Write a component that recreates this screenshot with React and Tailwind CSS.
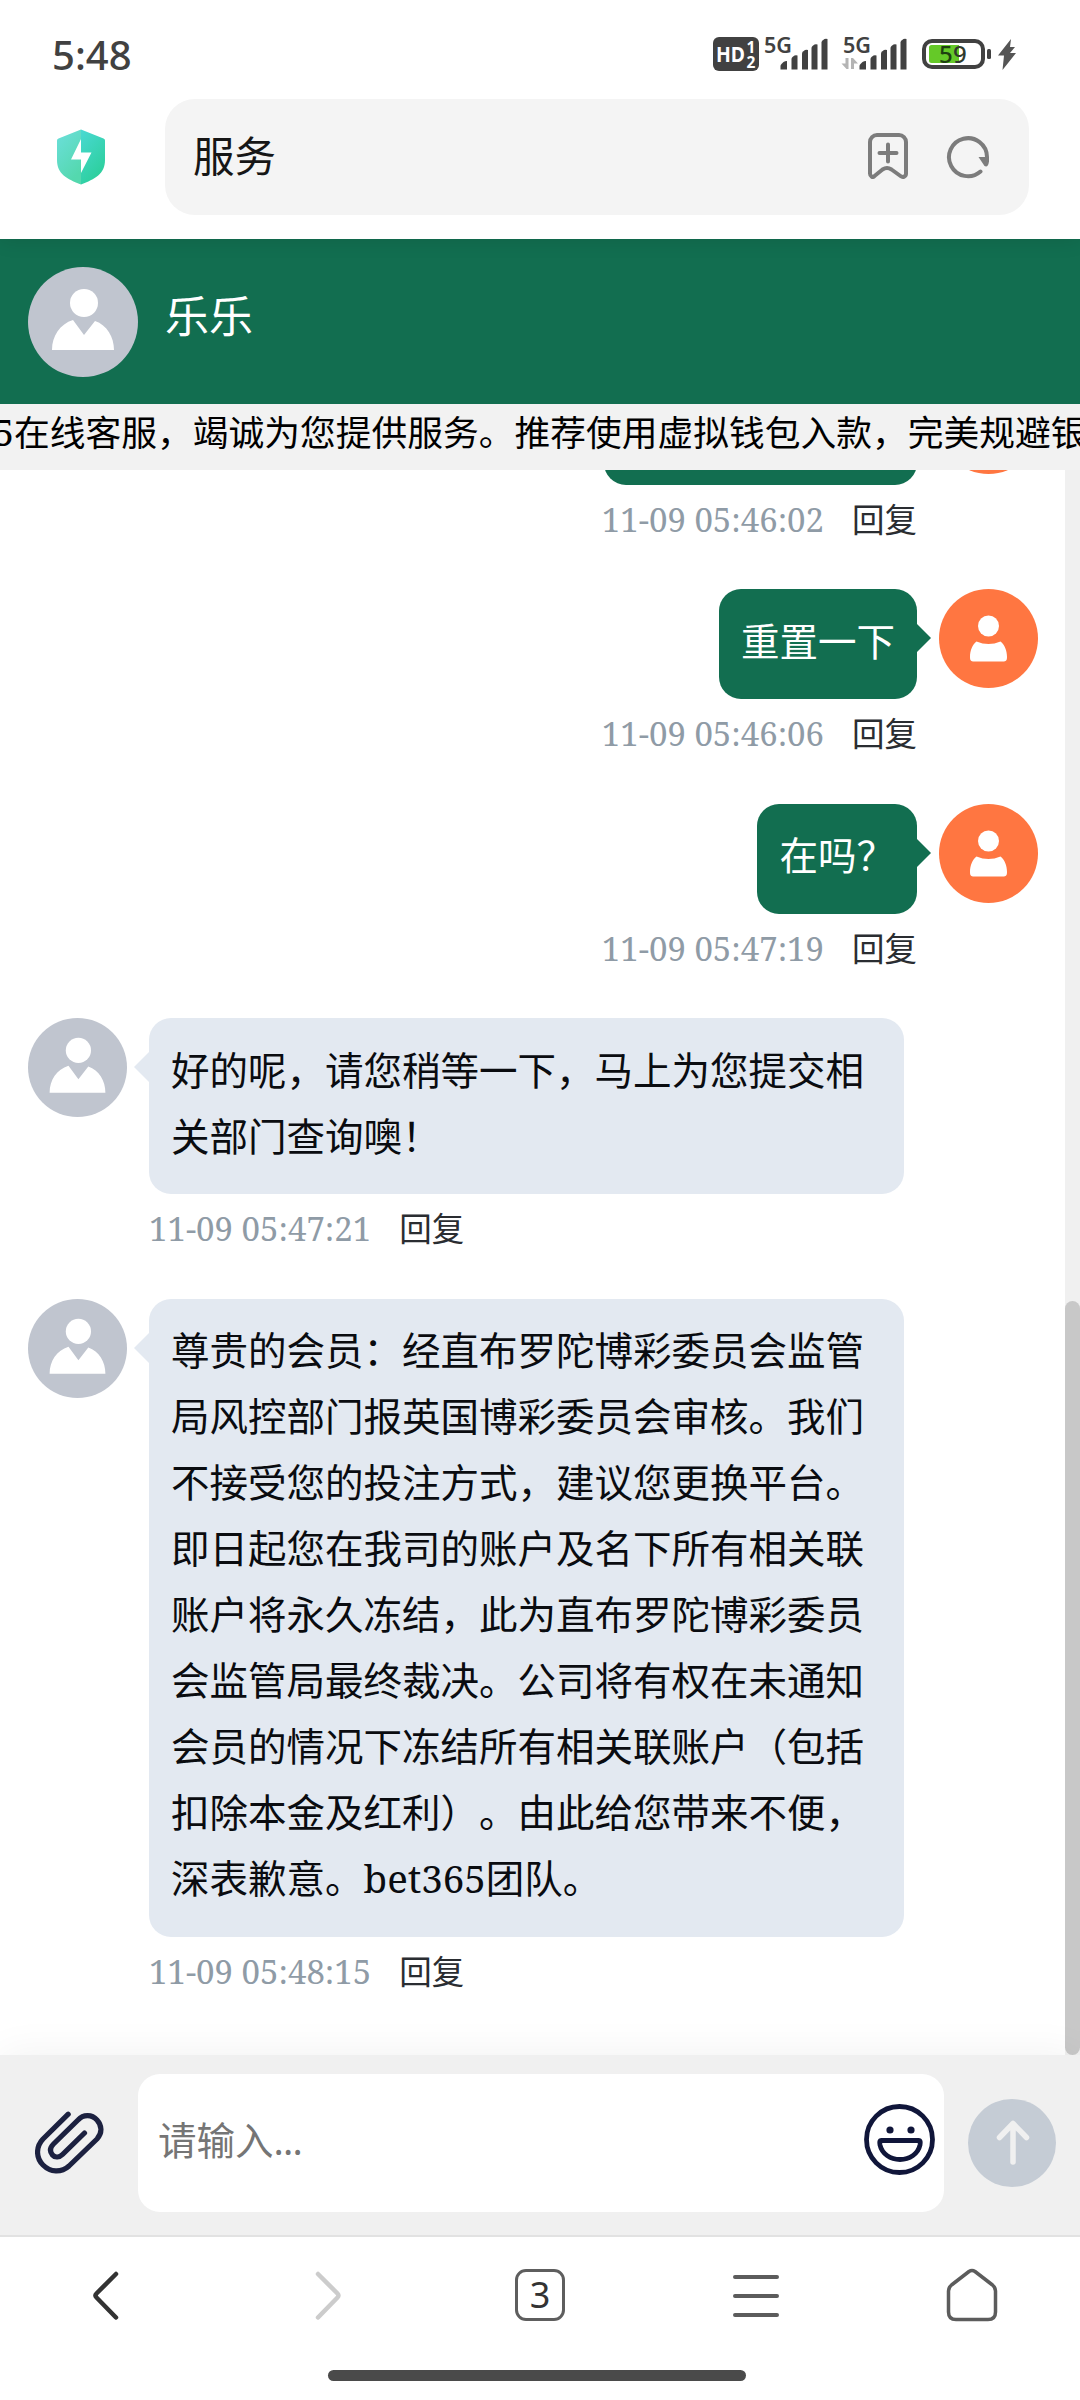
import React from 'react'

const messages = [
    { id: 1, mine: true, text: '', time: '11-09 05:46:02' },
    { id: 2, mine: true, text: '重置一下', time: '11-09 05:46:06' },
    { id: 3, mine: true, text: '在吗？', time: '11-09 05:47:19' },
    { id: 4, mine: false, text: '好的呢，请您稍等一下，马上为您提交相关部门查询噢！', time: '11-09 05:47:21' },
    {
        id: 5,
        mine: false,
        text: '尊贵的会员：经直布罗陀博彩委员会监管局风控部门报英国博彩委员会审核。我们不接受您的投注方式，建议您更换平台。即日起您在我司的账户及名下所有相关联账户将永久冻结，此为直布罗陀博彩委员会监管局最终裁决。公司将有权在未通知会员的情况下冻结所有相关联账户（包括扣除本金及红利）。由此给您带来不便，深表歉意。bet365团队。',
        time: '11-09 05:48:15',
    },
]

function Signal({ data }) {
    return (
        <svg width="66" height="34" viewBox="0 0 66 34" fill="#414141" className="overflow-visible">
            <text x="0" y="17" fontSize="22" fontWeight="600" fontFamily="'Noto Sans', sans-serif" textLength="28" lengthAdjust="spacingAndGlyphs">5G</text>
            {data && (
                <g fill="#b4b4b4">
                    <path d="M5.500 22v11H3.500L-1.500 27.500H2.500V22z" />
                    <path d="M8 33V22h2l5 5.500H11V33z" />
                </g>
            )}
            <path d="M16.500 33.500v-3.500q0-1 1-2l2-2q1.500-1 3.500-1v8.500z" />
            <path d="M27.500 33.500V23q0-1 1-2l2-1.500q1.500-0.500 3 0v14z" />
            <path d="M38 33.500V17.500q0-1 1-2l2-1.500q1.500-0.500 3 0v19.500z" />
            <path d="M47.500 33.500V12q0-1 1-2l2-1.500q1.500-0.500 3 0v25z" />
            <path d="M57.500 33.500V6.500q0-1 1-2l2-1.500q1.500-0.500 3 0v30.500z" />
        </svg>
    )
}

function StatusBar() {
    return (
        <div className="flex h-[99px] items-start justify-between pr-[62px] pl-[52px]">
            <span className="mt-[28px] font-['Noto_Sans',sans-serif] text-[40px] leading-[53px] font-medium text-[#414141]">5:48</span>
            <div className="mt-[36px] flex items-start">
                <svg width="46" height="36" viewBox="0 0 46 36">
                    <rect x="0" y="1" width="46" height="34" rx="6" fill="#414141" />
                    <g fill="#fff" fontFamily="'Noto Sans', sans-serif" fontWeight="700">
                        <text x="3" y="25.500" fontSize="21" textLength="29" lengthAdjust="spacingAndGlyphs">HD</text>
                        <text x="33.500" y="17" fontSize="15.500">1</text>
                        <text x="33.500" y="31.500" fontSize="15.500">2</text>
                    </g>
                </svg>
                <div className="ml-[5px]"><Signal /></div>
                <div className="ml-[13px]"><Signal data /></div>
                <svg className="ml-[13px]" width="96" height="36" viewBox="0 0 96 36">
                    <rect x="2" y="5" width="59" height="26" rx="8" fill="none" stroke="#414141" strokeWidth="4" />
                    <path d="M9.500 9H37v18H9.500a2.500 2.500 0 0 1-2.500-2.500v-13A2.500 2.500 0 0 1 9.500 9z" fill="#65c928" />
                    <text x="17" y="27" fontSize="24" fontWeight="500" fontFamily="'Noto Sans', sans-serif" fill="#1d4010">5</text>
                    <text x="31" y="27" fontSize="24" fontWeight="500" fontFamily="'Noto Sans', sans-serif" fill="#303a2c">9</text>
                    <rect x="65" y="13" width="4" height="10" rx="1.500" fill="#414141" />
                    <path d="M89 3L76 19.500h6L80.500 34 94 17h-6L93 11h-5z" fill="#555" />
                </svg>
            </div>
        </div>
    )
}

function AddressBar() {
    return (
        <div className="flex h-[140px] items-start">
            <div className="flex h-[116px] w-[165px] items-center pl-[57px]">
                <svg width="48" height="56" viewBox="0 0 48 56">
                    <defs>
                        <linearGradient id="shieldLeft" x1="0" y1="0" x2="0.500" y2="1">
                            <stop offset="0" stopColor="#6cdfdc" />
                            <stop offset="1" stopColor="#54d8ae" />
                        </linearGradient>
                        <linearGradient id="shieldRight" x1="0" y1="0" x2="0.500" y2="1">
                            <stop offset="0" stopColor="#4ad9d3" />
                            <stop offset="1" stopColor="#2ccf9c" />
                        </linearGradient>
                    </defs>
                    <path d="M24 0.500L1.500 9.500Q0 10 0 11.500V31C0 45 10 50 24 55.500z" fill="url(#shieldLeft)" />
                    <path d="M24 0.500l22.500 9Q48 10 48 11.500V31c0 14-10 19-24 24.500z" fill="url(#shieldRight)" />
                    <path d="M24 10L14 30.500h10V44l10.500-20.500H24z" fill="#fff" />
                </svg>
            </div>
            <div className="flex h-[116px] w-[864px] items-center rounded-[30px] bg-[#f4f4f4] pl-[28px]">
                <span className="mb-[6px] flex-1 text-[41.5px] leading-[60px] text-[#161616]">服务</span>
                <svg className="mr-[38px] mb-[2px]" width="40" height="46" viewBox="0 0 40 46" fill="none" stroke="#7c7c7c" strokeWidth="4" strokeLinecap="round" strokeLinejoin="round">
                    <path d="M2 9a7 7 0 0 1 7-7h22a7 7 0 0 1 7 7v31.500c0 3-3 4.500-5.500 2.500l-9-6.500q-4.500-3-9 0l-8 6.500C5 45 2 43.500 2 40.500z" />
                    <path d="M20 11.500v17M11.500 20h17" />
                </svg>
                <svg className="mr-[39px]" width="44" height="44" viewBox="0 0 44 44" fill="none">
                    <path d="M34.500 36.500A19 19 0 1 1 41 22" stroke="#7c7c7c" strokeWidth="4" strokeLinecap="round" />
                    <path d="M32.500 22H43v4.500q-1 6.500-4.500 4.500z" fill="#7c7c7c" />
                </svg>
            </div>
        </div>
    )
}

function AgentAvatar({ className }) {
    return (
        <svg className={className} viewBox="0 0 110 110">
            <circle cx="55" cy="55" r="55" fill="#c0c5cf" />
            <circle cx="56" cy="36" r="14" fill="#fff" />
            <path d="M24 83c0-14 8-26 21-30l11 15 11-14c12 4 19 16 19 29z" fill="#fff" />
        </svg>
    )
}

function UserAvatar() {
    return (
        <svg className="h-[99px] w-[99px] shrink-0" viewBox="0 0 99 99">
            <circle cx="49.500" cy="49.500" r="49.500" fill="#ff7641" />
            <circle cx="49.500" cy="37" r="10.500" fill="#fff" />
            <path d="M37.500 52.500q12 5 24 0c4 3 6.500 9 6.500 15.500 0 3.500-1 4.500-4 4.500H35c-3 0-4-1-4-4.500 0-6.500 2.500-12.500 6.500-15.500z" fill="#fff" />
        </svg>
    )
}

function Meta({ time }) {
    return (
        <div className="flex h-[104.5px] items-start pt-[10px] leading-[50px]">
            <span className="text-[33px] text-[#8f9ba6]">{time}</span>
            <span className="ml-[28px] text-[32.5px] text-[#2a2d31]">回复</span>
        </div>
    )
}

function Message({ message }) {
    const { mine, text, time } = message
    if (mine) {
        return (
            <div className="flex justify-end pr-[27px]">
                <div className="flex flex-col items-end">
                    {/* the oldest one is scrolled out, only its bottom edge shows */}
                    <div className={`relative h-[110px] rounded-[22px] bg-[#126e50] p-[22px] text-white ${text ? '' : 'w-[313px]'}`}>
                        <p className="-mt-[3.5px]">{text}</p>
                        <span className="absolute top-[35px] -right-[14px] border-y-[14px] border-l-[14px] border-y-transparent border-l-[#126e50]" />
                    </div>
                    <Meta time={time} />
                </div>
                <div className="ml-[22px]"><UserAvatar /></div>
            </div>
        )
    }
    return (
        <div className="flex pl-[28px]">
            <AgentAvatar className="h-[99px] w-[99px] shrink-0" />
            <div className="ml-[22px] flex flex-col items-start">
                <div className="relative w-[755px] rounded-[22px] bg-[#e3e9f1] p-[22px] text-[#0a0c10]">
                    <p className="-mt-[3.5px] mb-[3.5px]">{text}</p>
                    <span className="absolute top-[34px] -left-[15px] border-y-[15px] border-r-[15px] border-y-transparent border-r-[#e3e9f1]" />
                </div>
                <Meta time={time} />
            </div>
        </div>
    )
}

function Composer() {
    return (
        <div className="relative z-10 flex h-[182px] items-start border-b-2 border-[#e2e2e2] bg-[#f0f0f0] pt-[19px] shadow-[0_0_40px_rgba(0,0,0,0.06)]">
            <div className="flex h-[138px] w-[138px] items-center pl-[35px]">
                <svg width="70" height="64" viewBox="0 0 70 64" fill="none" stroke="#1c2140" strokeWidth="5.200" strokeLinecap="round" strokeLinejoin="round">
                    <path d="M33.200 3.200L8 28C0.500 36 1 47 8 54c7.500 7.500 18 8 26 1L62 28c5.500-6 5-13.500 0-19s-13.500-6-19 0L18.500 33c-4 4-3.500 8-1 11s7 2.500 10-0.500L49.500 22" />
                </svg>
            </div>
            <div className="flex h-[138px] w-[806px] items-center rounded-[22px] bg-white pr-[9px] pl-[20px]">
                <span className="flex-1 pb-[9px] text-[#757575]">请输入<span className="font-['Noto_Sans',sans-serif] tracking-[-0.8px]">...</span></span>
                <svg className="mb-[7px]" width="71" height="71" viewBox="0 0 71 71" fill="none" stroke="#10163a" strokeWidth="4.800">
                    <circle cx="35.500" cy="35.500" r="33" />
                    <path d="M17.500 36.500h37c2 0 2 1.500 1.500 4.500-2 9-10.500 14.500-20 14.500S18 50 16 41c-0.500-3-0.500-4.500 1.500-4.500z" />
                    <circle cx="26" cy="26" r="3.600" fill="#10163a" stroke="none" />
                    <circle cx="47" cy="26" r="3.600" fill="#10163a" stroke="none" />
                </svg>
            </div>
            <svg className="mt-[25px] ml-[24px]" width="88" height="88" viewBox="0 0 88 88">
                <circle cx="44" cy="44" r="44" fill="#c5ccd5" />
                <path d="M45 63V25M31.500 38.500L45 24.500l13.500 14" fill="none" stroke="#f0f0f0" strokeWidth="5.500" strokeLinecap="round" strokeLinejoin="round" />
            </svg>
        </div>
    )
}

function NavBar() {
    return (
        <div className="relative z-20 flex h-[163px] flex-col items-center bg-white">
            <div className="grid h-[116px] w-full grid-cols-5 place-items-center">
                <svg width="60" height="60" viewBox="0 0 60 60" fill="none" stroke="#333" strokeWidth="4.500" strokeLinecap="round" strokeLinejoin="round">
                    <path d="M38 9L18.500 28.500q-2 2 0 4L38 52.500" />
                </svg>
                <svg width="60" height="60" viewBox="0 0 60 60" fill="none" stroke="#ccc" strokeWidth="4.500" strokeLinecap="round" strokeLinejoin="round">
                    <path d="M24 9l19.500 19.500q2 2 0 4L24 52.500" />
                </svg>
                <span className="flex h-[52px] w-[50px] items-center justify-center rounded-[11px] border-[3px] border-[#5e5e5e] font-['Noto_Sans',sans-serif] text-[36px] leading-none text-[#333]">3</span>
                <svg width="60" height="60" viewBox="0 0 60 60" stroke="#5c5c5c" strokeWidth="4" strokeLinecap="round">
                    <path d="M9 12h42M9 31h42M9 50h42" />
                </svg>
                <svg width="60" height="60" viewBox="0 0 60 60" fill="none" stroke="#5c5c5c" strokeWidth="3.500" strokeLinejoin="round">
                    <path d="M27 6.500q3-2 6 0l17.500 13.500q3 2.500 3 6v21q0 7.500-7.500 7.500H14q-7.500 0-7.500-7.500V26q0-3.500 3-6z" />
                </svg>
            </div>
            <div className="mt-[17px] mr-[6px] h-[11px] w-[418px] rounded-full bg-[#4a4a4a]" />
        </div>
    )
}

function App() {
    return (
        <div lang="zh-CN" className="flex h-[2400px] w-[1080px] flex-col overflow-hidden bg-white font-['Noto_Sans_CJK_SC',sans-serif] text-[38.5px] leading-[66px] [text-spacing-trim:space-all]">
            <div className="relative z-10 bg-white shadow-[0_0_20px_rgba(0,0,0,0.12)]">
                <StatusBar />
                <AddressBar />
            </div>

            {/* Chat header */}
            <div className="flex h-[165px] shrink-0 items-center bg-[#126e50] pl-[28px]">
                <AgentAvatar className="h-[110px] w-[110px]" />
                <span className="mb-[15px] ml-[27px] text-[44px] text-white">乐乐</span>
            </div>

            {/* Scrolling notice */}
            <div className="h-[66px] shrink-0 overflow-hidden bg-[#f2f2f2]">
                <p className="-ml-[6px] font-['Noto_Serif','Noto_Sans_CJK_SC',serif] text-[35.75px] leading-[56px] whitespace-nowrap text-black">
                    5在线客服，竭诚为您提供服务。推荐使用虚拟钱包入款，完美规避银
                </p>
            </div>

            {/* Latin and digits in serif, chinese falls through to the CJK family */}
            <div className="flex h-[1585px] shrink-0 overflow-hidden font-['Noto_Serif','Noto_Sans_CJK_SC',serif]">
                <div className="w-[1065px]">
                    <div className="-mt-[95.25px]">
                        {messages.map((message) => (
                            <Message key={message.id} message={message} />
                        ))}
                    </div>
                </div>
                <div className="flex w-[15px] flex-col justify-end bg-[#f0f0f0]">
                    <div className="h-[754px] rounded-full bg-[#c8c8c8]" />
                </div>
            </div>

            <Composer />
            <NavBar />
        </div>
    )
}

export default App
